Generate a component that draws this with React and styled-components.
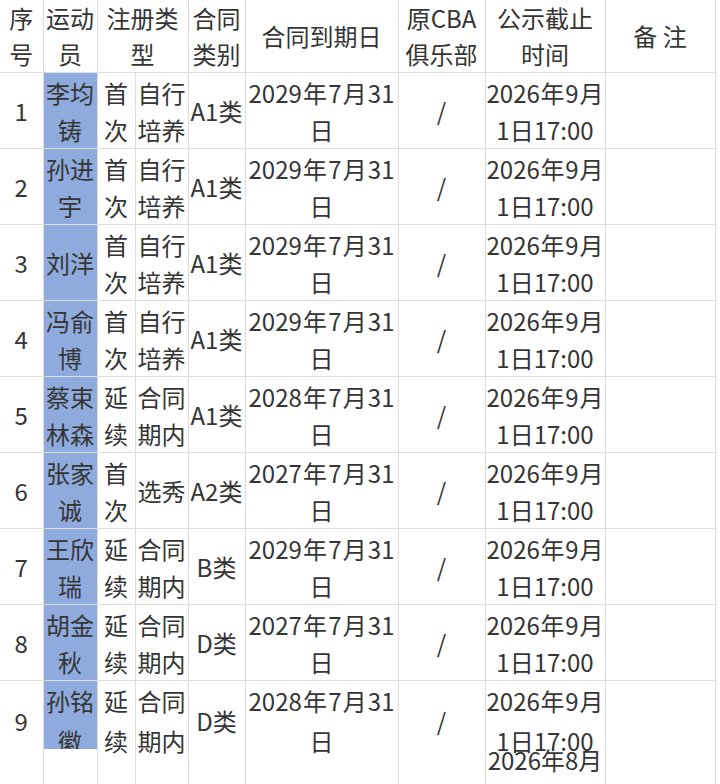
import React from "react";
import styled, { createGlobalStyle } from "styled-components";

const Global = createGlobalStyle`
  html, body { margin: 0; padding: 0; background: #ffffff; }
  body {
    width: 720px;
    height: 784px;
    overflow: hidden;
    font-family: "Noto Sans CJK SC", "Noto Sans", sans-serif;
    color: #353535;
  }
`;

const Table = styled.table`
  border-collapse: collapse;
  table-layout: fixed;
  width: 715px;
  font-size: 24px;
  line-height: 37px;
`;

const HeadRow = styled.tr`
  height: 72px;
`;

const Row = styled.tr`
  height: ${(p) => (p.$last ? "110px" : "76px")};
`;

const HeadCell = styled.th`
  font-weight: 400;
  line-height: 36px;
  padding: 0;
  text-align: center;
  vertical-align: middle;
  border-right: 1px solid #dcdcdc;
  border-bottom: 1px solid #dcdcdc;
  word-break: break-all;
`;

const Cell = styled.td`
  padding: 0 ${(p) => p.$pad || 0}px;
  text-align: ${(p) => (p.$justify ? "justify" : "center")};
  text-align-last: center;
  vertical-align: ${(p) => (p.$last ? "top" : "middle")};
  border-right: 1px solid #dcdcdc;
  border-bottom: ${(p) => (p.$last ? "none" : "1px solid #dcdcdc")};
  background: ${(p) => (p.$blue && !p.$last ? "#8fabdd" : "transparent")};
  word-break: break-all;
  overflow: visible;
`;

const Inner = styled.div`
  height: ${(p) => p.$h || 80}px;
  display: flex;
  flex-direction: column;
  justify-content: ${(p) => (p.$top ? "flex-start" : "center")};
  line-height: 40px;
  background: ${(p) => (p.$blue ? "#8fabdd" : "transparent")};
  overflow: ${(p) => (p.$clip ? "hidden" : "visible")};
`;

const Lines = styled.div`
  text-align: justify;
  text-align-last: center;
`;

const Extra = styled.div`
  margin-top: -14px;
  line-height: 26px;
  text-align: center;
  white-space: nowrap;
`;

const widths = [43, 54, 38, 53, 57, 153, 87, 120, 110];

const rows = [
  ["1", "李均铸", "首次", "自行培养", "A1类", "2029年7月31日"],
  ["2", "孙进宇", "首次", "自行培养", "A1类", "2029年7月31日"],
  ["3", "刘洋", "首次", "自行培养", "A1类", "2029年7月31日"],
  ["4", "冯俞博", "首次", "自行培养", "A1类", "2029年7月31日"],
  ["5", "蔡束林森", "延续", "合同期内", "A1类", "2028年7月31日"],
  ["6", "张家诚", "首次", "选秀", "A2类", "2027年7月31日"],
  ["7", "王欣瑞", "延续", "合同期内", "B类", "2029年7月31日"],
  ["8", "胡金秋", "延续", "合同期内", "D类", "2027年7月31日"],
];

const last = ["9", "孙铭徽", "延续", "合同期内", "D类", "2028年7月31日"];

export default function App() {
  return (
    <>
      <Global />
      <Table>
        <colgroup>
          {widths.map((w, i) => (
            <col key={i} style={{ width: w }} />
          ))}
        </colgroup>
        <thead>
          <HeadRow>
            <HeadCell>序号</HeadCell>
            <HeadCell>运动员</HeadCell>
            <HeadCell colSpan={2}>注册类型</HeadCell>
            <HeadCell>合同类别</HeadCell>
            <HeadCell>合同到期日</HeadCell>
            <HeadCell>原CBA俱乐部</HeadCell>
            <HeadCell>公示截止时间</HeadCell>
            <HeadCell>备 注</HeadCell>
          </HeadRow>
        </thead>
        <tbody>
          {rows.map((r) => (
            <Row key={r[0]}>
              <Cell>{r[0]}</Cell>
              <Cell $blue>{r[1]}</Cell>
              <Cell>{r[2]}</Cell>
              <Cell>{r[3]}</Cell>
              <Cell>{r[4]}</Cell>
              <Cell $justify $pad={3}>{r[5]}</Cell>
              <Cell>/</Cell>
              <Cell $justify $pad={1}>2026年9月1日17:00</Cell>
              <Cell />
            </Row>
          ))}
          <Row $last>
            <Cell $last><Inner>{last[0]}</Inner></Cell>
            <Cell $last $blue>
              <Inner $blue $top $clip $h={68}>{last[1]}</Inner>
            </Cell>
            <Cell $last><Inner>{last[2]}</Inner></Cell>
            <Cell $last><Inner>{last[3]}</Inner></Cell>
            <Cell $last><Inner>{last[4]}</Inner></Cell>
            <Cell $last $pad={3}><Inner><Lines>{last[5]}</Lines></Inner></Cell>
            <Cell $last><Inner>/</Inner></Cell>
            <Cell $last $pad={1}>
              <Inner $top>
                <Lines>2026年9月1日17:00</Lines>
                <Extra>2026年8月</Extra>
              </Inner>
            </Cell>
            <Cell $last />
          </Row>
        </tbody>
      </Table>
    </>
  );
}
